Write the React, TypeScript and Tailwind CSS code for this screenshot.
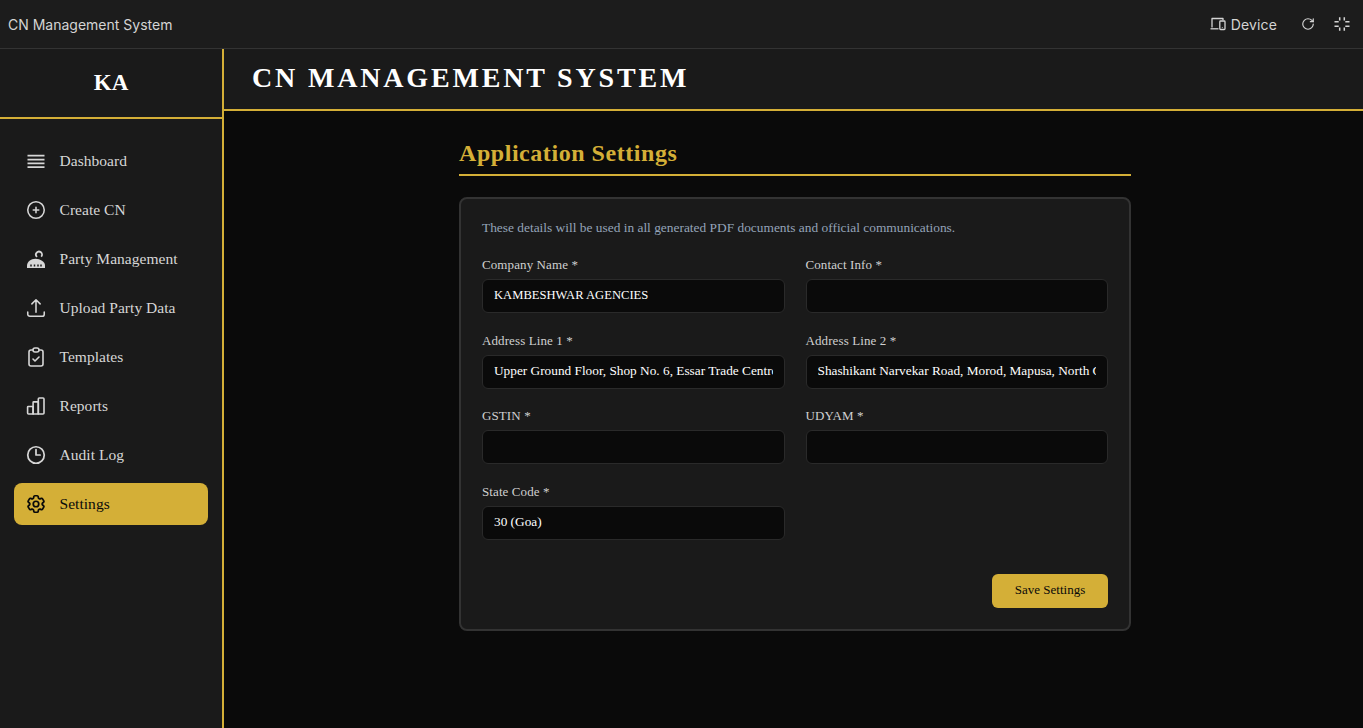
import React from "react";
import { RotateCw } from "lucide-react";
import { HiOutlinePlusCircle, HiOutlineArrowUpTray, HiOutlineClock, HiOutlineCog6Tooth } from "react-icons/hi2";
import { HiOutlineClipboardCheck } from "react-icons/hi";

const serif = "font-['Liberation_Serif','DejaVu_Serif',serif]";

const Lines = () => (
  <svg width="20" height="20" viewBox="0 0 20 20" fill="none" stroke="currentColor" strokeWidth="1.8">
    <path d="M1.5 4.7h17M1.5 8.6h17M1.5 12.4h17M1.5 16.2h17" />
  </svg>
);
const Party = () => (
  <svg width="20" height="20" viewBox="0 0 20 20" fill="none">
    <circle cx="13" cy="5.6" r="3" stroke="currentColor" strokeWidth="1.8" strokeDasharray="14 5" transform="rotate(130 13 5.6)" />
    <path d="M1 19v-2.5c0-3.6 3.8-6.7 8.5-6.7s9.5 3 9.5 6.7V19z" fill="currentColor" />
    <path d="M5 15.4v2M8.5 15.4v2M12 15.4v2M15 15.4v2" stroke="#1a1a1a" strokeWidth="1.5" />
  </svg>
);
const Bars = () => (
  <svg width="20" height="20" viewBox="0 0 20 20" fill="none" stroke="currentColor" strokeWidth="1.6" strokeLinejoin="round">
    <path d="M2.2 10.5h4.4a.5.5 0 0 1 .5.5v7H2.6a1 1 0 0 1-1-1v-5.9a.6.6 0 0 1 .6-.6z" />
    <path d="M7.1 18V6.5a.6.6 0 0 1 .6-.6h4a.6.6 0 0 1 .6.6V18z" />
    <path d="M12.3 18V3a1 1 0 0 1 1-1h3.7a1 1 0 0 1 1 1v14a1 1 0 0 1-1 1z" />
  </svg>
);
const DeviceIcon = () => (
  <svg width="16" height="16" viewBox="0 0 16 16" fill="none" stroke="currentColor" strokeWidth="1.3" strokeLinejoin="round">
    <path d="M2 11.5V2.5h11v1.8" />
    <path d="M0.5 12.8h8" />
    <rect x="9.8" y="5" width="5.2" height="8.5" rx="0.8" />
    <path d="M12.4 11.2v.6" />
  </svg>
);
const Shrink = () => (
  <svg width="16" height="16" viewBox="0 0 16 16" fill="none" stroke="currentColor" strokeWidth="1.5">
    <path d="M0.5 5.7h4.2M5.7 1.2v3.2M15.5 5.7h-4.2M10.3 1.2v3.2M0.5 10.3h4.2M5.7 14.8v-3.2M15.5 10.3h-4.2M10.3 14.8v-3.2" />
  </svg>
);

const ic = "shrink-0";
const nav: [string, React.ReactNode][] = [
  ["Dashboard", <Lines />],
  ["Create CN", <HiOutlinePlusCircle size={22} strokeWidth={1.7} className={ic} />],
  ["Party Management", <Party />],
  ["Upload Party Data", <HiOutlineArrowUpTray size={22} strokeWidth={1.7} className={ic} />],
  ["Templates", <HiOutlineClipboardCheck size={24} strokeWidth={1.6} className={ic} />],
  ["Reports", <Bars />],
  ["Audit Log", <HiOutlineClock size={22} strokeWidth={1.9} className={ic} />],
  ["Settings", <HiOutlineCog6Tooth size={22} strokeWidth={1.9} className={ic} />],
];

function Field({ label, value = "", caps = false }: { label: string; value?: string; caps?: boolean }) {
  return (
    <div className="flex flex-col">
      <label className="mb-[5px] text-[13px] leading-[18px] tracking-[0.1px] text-[#d0d0d0]">{label}</label>
      <input
        readOnly
        value={value}
        className={`h-[34px] w-full rounded-[6px] border border-[#2a2a2a] bg-[#0a0a0a] px-[11px] pb-[2px] text-white outline-none ${caps ? "text-[12.6px]" : "text-[13.3px]"} ${serif}`}
      />
    </div>
  );
}

export default function App() {
  return (
    <div className={`flex h-[728px] w-[1363px] flex-col overflow-hidden bg-[#0a0a0a] ${serif}`}>
      <div className="flex h-[49px] shrink-0 items-center justify-between border-b border-[#333] bg-[#1c1c1c] pr-[13px] pl-2 font-['Inter',sans-serif] text-[14px] text-[#d4d4d4]">
        <span>CN Management System</span>
        <div className="flex items-center">
          <DeviceIcon />
          <span className="mr-[24px] ml-[5px] tracking-[0.15px]">Device</span>
          <RotateCw size={14} strokeWidth={2} className="mr-[19px]" />
          <Shrink />
        </div>
      </div>
      <div className="flex min-h-0 flex-1">
        <aside className="flex w-[224px] shrink-0 flex-col border-r-2 border-[#d4af37] bg-[#1a1a1a]">
          <div className="flex h-[70px] shrink-0 items-center justify-center border-b-2 border-[#d4af37] text-[23px] font-bold text-white">KA</div>
          <nav className="flex flex-col gap-[7px] px-[14px] pt-[21px]">
            {nav.map(([name, icon]) => {
              const active = name === "Settings";
              return (
                <div
                  key={name}
                  className={`flex h-[42px] items-center gap-[13.5px] rounded-[8px] pl-3 text-[15.5px] tracking-[0.04px] ${
                    active ? "bg-[#d4af37] text-[#0a0a0a]" : "text-[#d6d6d6]"
                  }`}
                >
                  <span className="flex h-5 w-5 shrink-0 items-center justify-center">{icon}</span>
                  {name}
                </div>
              );
            })}
          </nav>
        </aside>
        <main className="flex min-w-0 flex-1 flex-col">
          <header className="flex h-[62px] shrink-0 items-center border-b-2 border-[#d4af37] bg-[#1a1a1a] pb-[2px] pl-7 text-[28px] font-bold tracking-[2.83px] text-white">
            CN MANAGEMENT SYSTEM
          </header>
          <div className="ml-[235px] w-[672px] pt-[28px]">
            <h1 className="border-b-2 border-[#d4af37] pb-[6px] text-[24px] leading-[29px] font-bold tracking-[0.55px] text-[#d4af37]">
              Application Settings
            </h1>
            <div className="mt-[21px] h-[434px] rounded-[8px] border-2 border-[#333] bg-[#1a1a1a] px-[21px] pt-[20px]">
              <p className="text-[13.4px] leading-[18px] text-[#94a3b8]">
                These details will be used in all generated PDF documents and official communications.
              </p>
              <div className="mt-[19px] grid grid-cols-2 gap-x-[21px] gap-y-[18.67px]">
                <Field label="Company Name *" value="KAMBESHWAR AGENCIES" caps />
                <Field label="Contact Info *" />
                <Field label="Address Line 1 *" value="Upper Ground Floor, Shop No. 6, Essar Trade Centre" />
                <Field label="Address Line 2 *" value="Shashikant Narvekar Road, Morod, Mapusa, North Goa" />
                <Field label="GSTIN *" />
                <Field label="UDYAM *" />
                <Field label="State Code *" value="30 (Goa)" />
              </div>
              <div className="mt-[34px] flex justify-end">
                <button className="h-[34px] w-[116px] rounded-[6px] bg-[#d4af37] pb-[2px] text-[13px] text-[#0a0a0a]">Save Settings</button>
              </div>
            </div>
          </div>
        </main>
      </div>
    </div>
  );
}
